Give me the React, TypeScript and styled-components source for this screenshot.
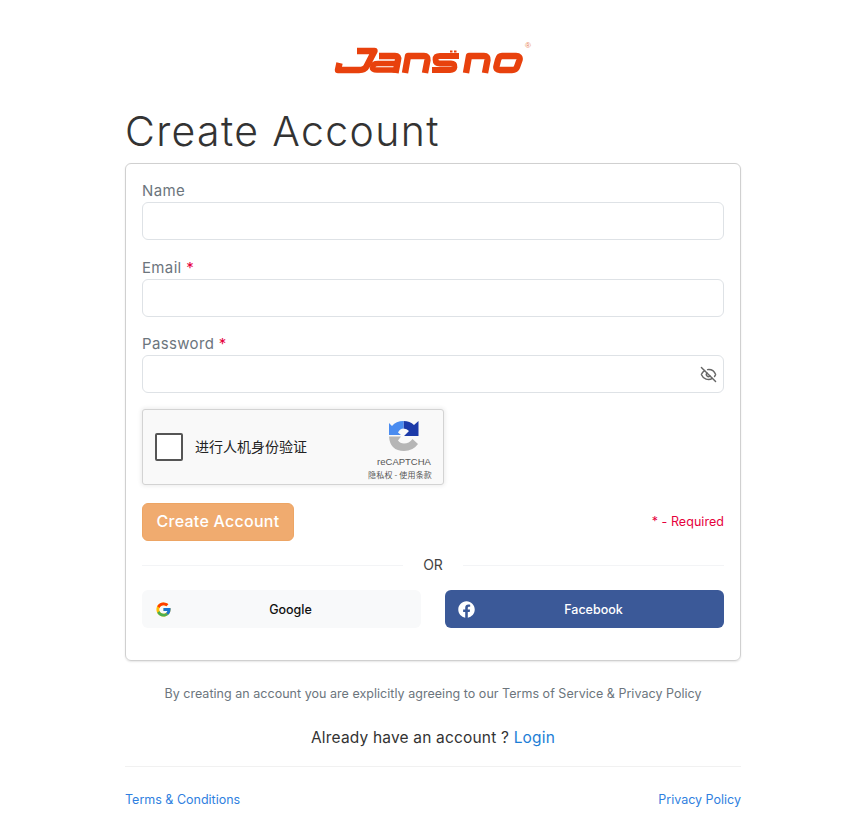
import React from "react";
import styled, { createGlobalStyle } from "styled-components";
import { FaFacebook } from "react-icons/fa";
import { FcGoogle } from "react-icons/fc";
import { LuEyeOff } from "react-icons/lu";

const FONT = `Inter, "Noto Sans CJK SC", sans-serif`;

const Global = createGlobalStyle`
  * { box-sizing: border-box; }
  html, body { margin: 0; padding: 0; background: #fff; }
  body { font-family: ${FONT}; color: #333; }
`;

const Page = styled.div`
  width: 616px;
  margin: 0 0 0 125px;
  padding-top: 40px;
`;
const LogoRow = styled.div`
  display: flex;
  justify-content: center;
  height: 39px;
  margin-left: -2px;
`;
const Title = styled.h1`
  margin: 26px 0 0;
  font-size: 41px;
  line-height: 52px;
  height: 58px;
  font-weight: 300;
  letter-spacing: 1.35px;
  color: #333;
`;
const Card = styled.form`
  height: 498px;
  border: 1px solid #d0d0d0;
  border-radius: 6px;
  box-shadow: 0 1px 2px rgba(0, 0, 0, 0.1);
  padding: 16px;
  display: flex;
  flex-direction: column;
`;
const Field = styled.div`
  height: 76.5px;
  display: flex;
  flex-direction: column;
`;
const Label = styled.label`
  height: 22px;
  font-size: 15px;
  line-height: 22px;
  color: #6c757d;
  letter-spacing: 0.35px;
`;
const Required = styled.span`
  color: #e6003d;
`;
const InputWrap = styled.div`
  position: relative;
  height: 38px;
`;
const Input = styled.input`
  display: block;
  width: 100%;
  height: 38px;
  border: 1px solid #dee2e6;
  border-radius: 6px;
  background: #fff;
  outline: none;
`;
const EyeButton = styled.span`
  position: absolute;
  right: 7px;
  top: 11px;
  display: flex;
  color: #666;
  font-size: 17px;
`;
const Captcha = styled.div`
  width: 302px;
  height: 76px;
  margin-top: -0.5px;
  background: #f9f9f9;
  border: 1px solid #d3d3d3;
  border-radius: 3px;
  box-shadow: 0 0 4px 1px rgba(0, 0, 0, 0.08);
  display: flex;
  align-items: center;
  padding: 0 6px 0 12px;
`;
const CheckBox = styled.span`
  width: 28px;
  height: 28px;
  background: #fff;
  border: 2px solid #555;
  border-radius: 2px;
  flex: none;
`;
const CaptchaText = styled.span`
  margin-left: 12px;
  padding-bottom: 2px;
  flex: 1;
  font-family: "Noto Sans CJK SC", sans-serif;
  font-size: 14px;
  color: #222;
`;
const CaptchaBrand = styled.div`
  display: flex;
  flex-direction: column;
  align-items: center;
  width: 66px;
  padding-top: 6.5px;
`;
const CaptchaName = styled.span`
  font-family: "Liberation Sans", sans-serif;
  font-size: 9.5px;
  line-height: 12px;
  margin-top: 3.5px;
  color: #555;
  white-space: nowrap;
`;
const CaptchaLinks = styled.span`
  font-family: "Noto Sans CJK SC", sans-serif;
  font-size: 8px;
  line-height: 12px;
  margin: 1px 8px 0 0;
  letter-spacing: 0.15px;
  color: #555;
  white-space: nowrap;
`;
const ActionRow = styled.div`
  display: flex;
  justify-content: space-between;
  align-items: center;
  height: 38px;
  margin-top: 18px;
`;
const Submit = styled.button`
  width: 152px;
  height: 38px;
  background: #f0ab6f;
  border: 1px solid #eda564;
  border-radius: 6px;
  color: #fff;
  font-family: ${FONT};
  font-size: 16px;
  font-weight: 500;
  letter-spacing: 0.25px;
  padding: 0 0 2px;
`;
const RequiredNote = styled.span`
  font-size: 12.5px;
  letter-spacing: 0.05px;
  padding-bottom: 2px;
  color: #e6003d;
`;
const Divider = styled.div`
  display: flex;
  align-items: center;
  gap: 20px;
  height: 24px;
  margin-top: 12px;
  font-size: 14px;
  color: #444;
  &::before, &::after {
    content: "";
    flex: 1;
    height: 1px;
    background: #f3f4f6;
  }
`;
const DividerLabel = styled.span`
  padding-bottom: 2px;
`;
const SocialRow = styled.div`
  display: grid;
  grid-template-columns: 1fr 1fr;
  gap: 24px;
  margin-top: 13px;
`;
const SocialButton = styled.button<{ $variant: "google" | "facebook" }>`
  position: relative;
  height: 38px;
  border: 0;
  border-radius: 6px;
  font-family: ${FONT};
  font-size: 12.5px;
  font-weight: 450;
  padding: 0 0 0 18px;
  background: ${(p) => (p.$variant === "google" ? "#f8f9fa" : "#3b5998")};
  color: ${(p) => (p.$variant === "google" ? "#111" : "#fff")};
  svg {
    position: absolute;
    left: 12.5px;
    top: 10.5px;
    font-size: 17px;
  }
`;
const Agreement = styled.p`
  margin: 24px 0 0;
  text-align: center;
  font-size: 12.5px;
  line-height: 18px;
  letter-spacing: 0.03px;
  color: #6c757d;
`;
const HaveAccount = styled.p`
  margin: 24px 0 0;
  text-align: center;
  font-size: 15.5px;
  line-height: 22px;
  letter-spacing: 0.18px;
  color: #333;
`;
const Link = styled.a`
  color: #1c7ed6;
  text-decoration: none;
`;
const Footer = styled.div`
  margin-top: 17px;
  border-top: 1px solid #f1f1f1;
  padding-top: 24px;
  display: flex;
  justify-content: space-between;
  font-size: 12.5px;
  line-height: 18px;
`;
const FooterLink = styled.a`
  color: #2f7fe0;
  text-decoration: none;
`;
const LogoMark = styled.text`
  font-family: "Liberation Sans", sans-serif;
  font-size: 8px;
  fill: #e8835a;
`;

const Logo = () => (
  <svg width="200" height="39" viewBox="0 0 200 39" aria-label="Jansno">
    <g fill="none" stroke="#e8410d" strokeWidth="6.4" strokeLinejoin="round" strokeLinecap="butt">
      <path d="M25 11 H42.5 L35 25.5 Q33 30 27 30 H6 L7.5 23" />
      <path d="M47 16 H63 Q67 16 66 20 L63.5 33" />
      <path d="M64 23.5 H46 Q41 23.5 40.5 27 Q40 30 45 30 H63" strokeWidth="5.6" />
      <path d="M73 33 L76 16 H92 Q96 16 95.5 20 L93 33" />
      <path d="M127 16 H108 Q103.5 16 103.5 19.5 Q103.5 23.5 108 23.5 H119 Q123 23.5 122.5 27 Q122 30 118 30 H100" strokeWidth="5.8" />
      <path d="M118 11.5 h2.5 M122 11.5 h2.5" strokeWidth="2" />
      <path d="M134 33 L137 16 H152 Q156 16 155.5 20 L153 33" />
      <path d="M170 16 H184 Q188.5 16 187.5 20 L185 27 Q184 30 180 30 H168 Q163.5 30 164.5 26 L166 20 Q167 16 170 16 Z" />
    </g>
    <LogoMark x="193" y="8">®</LogoMark>
  </svg>
);

const CaptchaLogo = () => (
  <svg width="32" height="32" viewBox="0 0 32 32">
    <path d="M15.5 1 Q22 1 26 5 L30.5 1 V16 H16 L21 11 Q19 8.5 15.5 8.5 Z" fill="#1c3aa9" />
    <path d="M15.5 1 Q8 1 4 6 L1 3 V15 H13 L10 12.5 Q12 8.5 15.5 8.5 Z" fill="#4a8cf0" />
    <path d="M1 16.5 Q2 31 16 31 Q25 31 30 24 L24.5 19 Q21 23.5 16 23.5 Q12 23.5 10 20.5 L13 16.5 Z" fill="#b6b6b6" />
  </svg>
);

export default function App() {
  return (
    <Page>
      <Global />
      <LogoRow>
        <Logo />
      </LogoRow>
      <Title>Create Account</Title>
      <Card>
        <Field>
          <Label>Name</Label>
          <InputWrap>
            <Input type="text" />
          </InputWrap>
        </Field>
        <Field>
          <Label>
            Email <Required>*</Required>
          </Label>
          <InputWrap>
            <Input type="email" />
          </InputWrap>
        </Field>
        <Field>
          <Label>
            Password <Required>*</Required>
          </Label>
          <InputWrap>
            <Input type="password" />
            <EyeButton>
              <LuEyeOff />
            </EyeButton>
          </InputWrap>
        </Field>
        <Captcha>
          <CheckBox />
          <CaptchaText>进行人机身份验证</CaptchaText>
          <CaptchaBrand>
            <CaptchaLogo />
            <CaptchaName>reCAPTCHA</CaptchaName>
            <CaptchaLinks>隐私权 - 使用条款</CaptchaLinks>
          </CaptchaBrand>
        </Captcha>
        <ActionRow>
          <Submit type="button">Create Account</Submit>
          <RequiredNote>* - Required</RequiredNote>
        </ActionRow>
        <Divider>
          <DividerLabel>OR</DividerLabel>
        </Divider>
        <SocialRow>
          <SocialButton type="button" $variant="google">
            <FcGoogle />
            Google
          </SocialButton>
          <SocialButton type="button" $variant="facebook">
            <FaFacebook />
            Facebook
          </SocialButton>
        </SocialRow>
      </Card>
      <Agreement>By creating an account you are explicitly agreeing to our Terms of Service &amp; Privacy Policy</Agreement>
      <HaveAccount>
        Already have an account ? <Link href="#">Login</Link>
      </HaveAccount>
      <Footer>
        <FooterLink href="#">Terms &amp; Conditions</FooterLink>
        <FooterLink href="#">Privacy Policy</FooterLink>
      </Footer>
    </Page>
  );
}
